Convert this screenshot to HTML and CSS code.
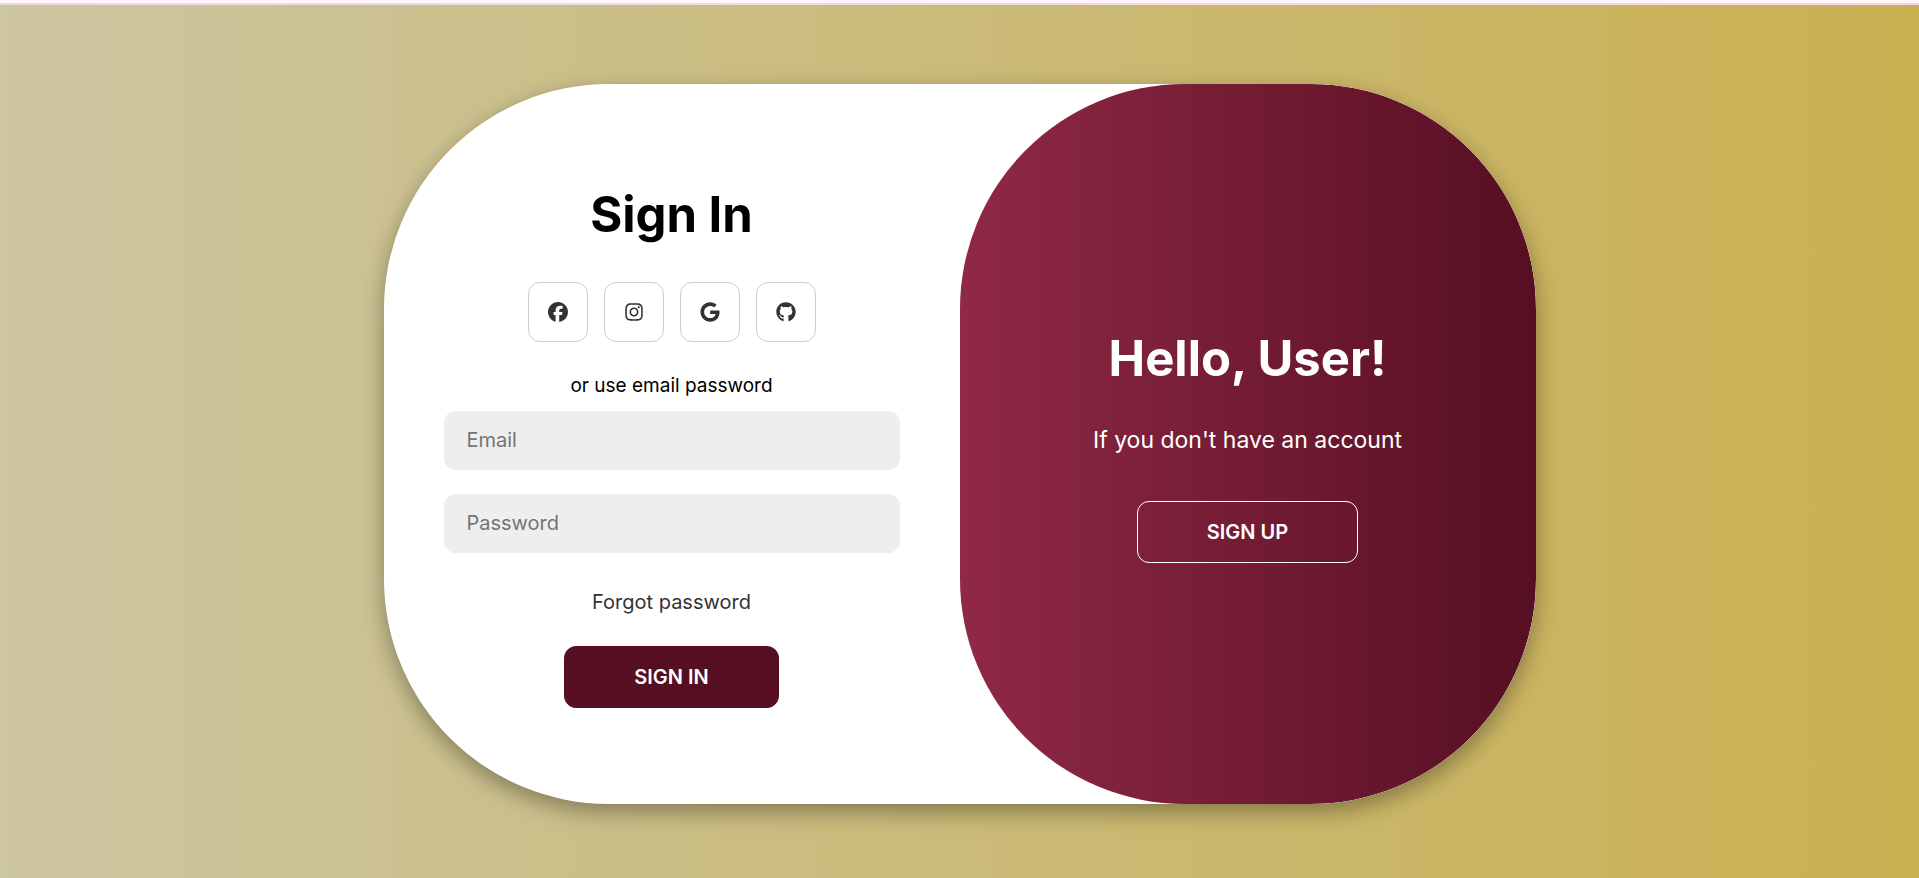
FILE: index.html
```html
<!DOCTYPE html>
<html lang="en">
<head>
  <meta charset="utf-8">
  <meta name="viewport" content="width=device-width, initial-scale=1">
  <title>Sign In</title>
  <link rel="stylesheet" href="styles.css">
</head>
<body>
  <main class="page">
    <div class="card">
      <form class="sign-in">
        <h1 class="title">Sign In</h1>
        <div class="social">
          <a class="social-link" href="#" aria-label="Facebook">
            <svg class="icon" viewBox="0 0 512 512" aria-hidden="true"><path d="M512 256C512 114.600 397.400 0 256 0S0 114.600 0 256C0 376 82.700 476.800 194.200 504.500V334.200H141.400V256h52.800V222.300c0-87.100 39.400-127.500 125-127.500c16.200 0 44.200 3.200 55.700 6.400V172c-6-.6-16.500-1-29.600-1c-42 0-58.200 15.900-58.200 57.200V256h83.600l-14.400 78.200H287V510.100C413.800 494.800 512 386.900 512 256z"/></svg>
          </a>
          <a class="social-link" href="#" aria-label="Instagram">
            <svg class="icon" viewBox="-32 0 512 512" aria-hidden="true"><path d="M224.100 141c-63.600 0-114.900 51.300-114.900 114.900s51.300 114.900 114.900 114.900S339 319.500 339 255.900 287.700 141 224.100 141zm0 189.600c-41.100 0-74.700-33.500-74.700-74.700s33.500-74.700 74.700-74.700 74.700 33.500 74.700 74.700-33.600 74.700-74.700 74.700zm146.400-194.300c0 14.900-12 26.800-26.800 26.800-14.900 0-26.800-12-26.800-26.800s12-26.800 26.800-26.800 26.800 12 26.800 26.800zm76.100 27.200c-1.700-35.900-9.900-67.700-36.200-93.900-26.200-26.200-58-34.400-93.900-36.200-37-2.100-147.900-2.100-184.900 0-35.800 1.700-67.600 9.900-93.900 36.100s-34.400 58-36.200 93.900c-2.100 37-2.100 147.900 0 184.900 1.700 35.900 9.900 67.700 36.200 93.900s58 34.400 93.900 36.200c37 2.100 147.900 2.100 184.900 0 35.900-1.700 67.700-9.900 93.900-36.200 26.200-26.200 34.400-58 36.200-93.900 2.100-37 2.100-147.800 0-184.800zM398.800 388c-7.800 19.600-22.900 34.700-42.600 42.600-29.500 11.700-99.500 9-132.100 9s-102.700 2.600-132.100-9c-19.600-7.800-34.700-22.900-42.600-42.600-11.700-29.500-9-99.500-9-132.100s-2.600-102.700 9-132.100c7.800-19.600 22.900-34.700 42.600-42.600 29.500-11.700 99.500-9 132.100-9s102.700-2.600 132.100 9c19.600 7.800 34.700 22.900 42.600 42.600 11.700 29.500 9 99.500 9 132.100s2.700 102.700-9 132.100z"/></svg>
          </a>
          <a class="social-link" href="#" aria-label="Google">
            <svg class="icon" viewBox="-12 0 512 512" aria-hidden="true"><path d="M488 261.800C488 403.300 391.100 504 248 504 110.800 504 0 393.200 0 256S110.800 8 248 8c66.800 0 123 24.500 166.300 64.900l-67.500 64.900C258.500 52.600 94.300 116.600 94.300 256c0 86.500 69.100 156.600 153.700 156.600 98.200 0 135-70.400 140.800-106.900H248v-85.300h236.100c2.300 12.700 3.900 24.900 3.900 41.400z"/></svg>
          </a>
          <a class="social-link" href="#" aria-label="GitHub">
            <svg class="icon" viewBox="-8 0 512 512" aria-hidden="true"><path d="M244.800 8C106.100 8 0 113.300 0 252c0 110.900 69.800 205.800 169.500 239.200 12.800 2.300 17.300-5.600 17.300-12.100 0-6.200-.3-40.400-.3-61.400 0 0-70 15-84.700-29.800 0 0-11.400-29.100-27.800-36.600 0 0-22.900-15.700 1.600-15.400 0 0 24.900 2 38.600 25.800 21.900 38.600 58.600 27.500 72.900 20.900 2.300-16 8.800-27.100 16-33.700-55.900-6.200-112.300-14.300-112.300-110.500 0-27.500 7.600-41.300 23.600-58.900-2.600-6.500-11.100-33.300 2.600-67.900 20.900-6.500 69 27 69 27 20-5.600 41.500-8.500 62.800-8.500s42.800 2.900 62.800 8.500c0 0 48.100-33.600 69-27 13.700 34.700 5.200 61.400 2.600 67.900 16 17.700 25.800 31.500 25.800 58.900 0 96.500-58.900 104.200-114.800 110.500 9.200 7.900 17 22.900 17 46.400 0 33.700-.3 75.400-.3 83.600 0 6.500 4.600 14.400 17.300 12.100C428.200 457.800 496 362.900 496 252 496 113.300 383.500 8 244.800 8z"/></svg>
          </a>
        </div>
        <p class="hint">or use email password</p>
        <input class="field" type="email" placeholder="Email" aria-label="Email">
        <input class="field" type="password" placeholder="Password" aria-label="Password">
        <a class="forgot" href="#">Forgot password</a>
        <button class="button" type="button">SIGN IN</button>
      </form>
      <section class="welcome">
        <h2 class="title">Hello, User!</h2>
        <p class="lead">If you don't have an account</p>
        <button class="button button-outline" type="button">SIGN UP</button>
      </section>
    </div>
  </main>
</body>
</html>
```
FILE: styles.css
```css
* {
  box-sizing: border-box;
  margin: 0;
}

body {
  display: flex;
  flex-direction: column;
  min-height: 100vh;
  border-top: 3px solid #fff5fa;
  font-family: Inter, "Open Sans", sans-serif;
}

.page {
  flex: 1;
  display: flex;
  align-items: center;
  justify-content: center;
  padding: 79px 24px 74px;
  border-top: 2px solid #ecdbe6;
  background: linear-gradient(to right, #ccc6a1, #cab051) border-box;
}

.card {
  display: grid;
  grid-template-columns: 1fr 1fr;
  width: 100%;
  max-width: 1152px;
  min-height: 720px;
  border-radius: 225px;
  background: #fff;
  box-shadow: 0 8px 22px rgba(0, 0, 0, 0.35);
  overflow: hidden;
}

.sign-in,
.welcome {
  display: flex;
  flex-direction: column;
  align-items: center;
  justify-content: center;
  padding: 0 60px 2px;
}

.welcome {
  border-radius: 225px;
  background: linear-gradient(to right, #902945, #560f22);
  color: #fff;
}

.title {
  font-size: 49px;
  line-height: 72px;
  font-weight: 700;
}

.social {
  display: flex;
  gap: 16px;
  margin: 31px 0 30px;
}

.social-link {
  display: flex;
  align-items: center;
  justify-content: center;
  width: 60px;
  height: 60px;
  border: 1px solid #ccc;
  border-radius: 12px;
  color: #333;
}

.icon {
  width: 20px;
  height: 20px;
  fill: currentColor;
}

.hint {
  margin-bottom: 12px;
  font-size: 19px;
  line-height: 27px;
}

.field {
  width: 100%;
  height: 59px;
  margin-bottom: 24px;
  padding: 0 23px;
  border: 0;
  border-radius: 12px;
  background: #eee;
  font: inherit;
  font-size: 20px;
}

.field::placeholder {
  color: #757575;
}

.forgot {
  margin: 10px 0 29px;
  color: #333;
  font-size: 20px;
  line-height: 30px;
  text-decoration: none;
}

.button {
  padding: 0 69px;
  border: 1px solid #560f22;
  border-radius: 12px;
  background: #560f22;
  color: #fff;
  font: inherit;
  font-size: 20px;
  font-weight: 600;
  line-height: 60px;
}

.button-outline {
  border-color: #fff;
  background: transparent;
}

.lead {
  margin: 30px 0 46px;
  font-size: 23px;
  line-height: 30px;
}
```
